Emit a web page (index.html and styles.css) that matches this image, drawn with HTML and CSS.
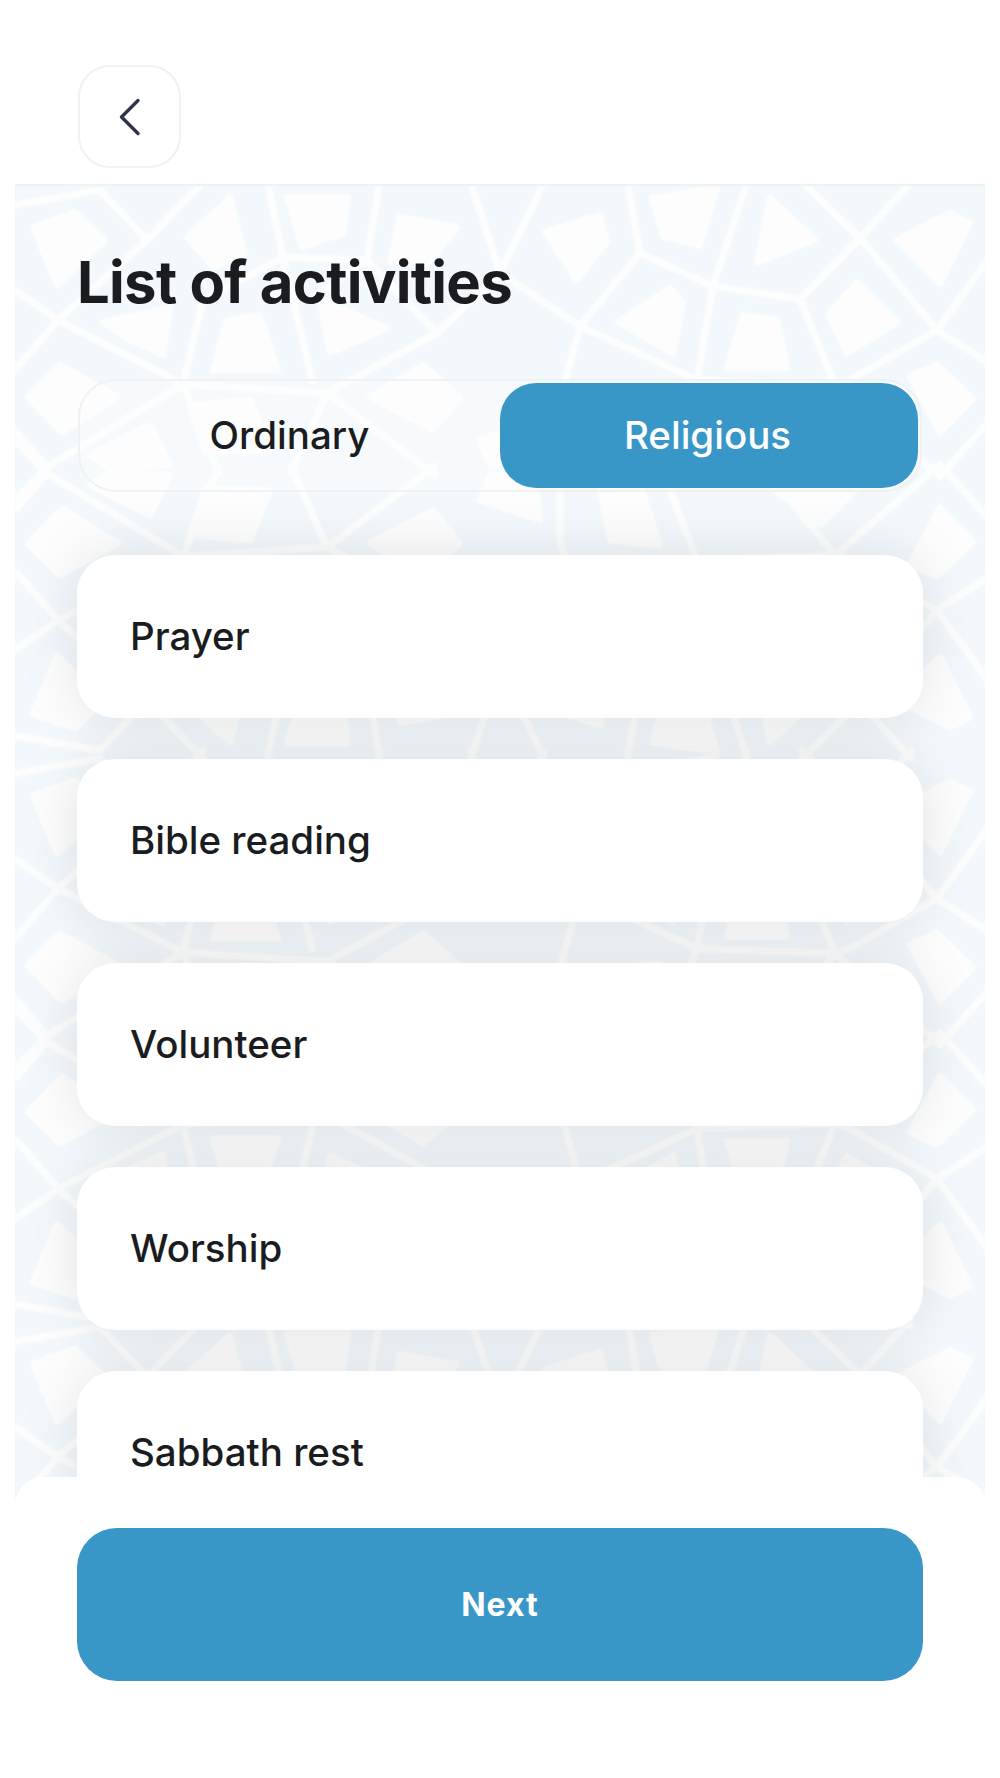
FILE: index.html
```html
<!DOCTYPE html>
<html lang="en">
<head>
  <meta charset="UTF-8">
  <meta name="viewport" content="width=device-width, initial-scale=1.0">
  <title>List of activities</title>
  <link rel="stylesheet" href="styles.css">
</head>
<body>
  <div class="screen">
    <header class="top-bar">
      <a class="back-btn" aria-label="Back">
        <svg width="24" height="40" viewBox="0 0 24 40" fill="none">
          <path d="M20 3.5 3.5 20 20 36.5" stroke="#2f3548" stroke-width="3.4" stroke-linecap="round" stroke-linejoin="round"/>
        </svg>
      </a>
    </header>

    <main class="content">
      <!-- background ornament, drawn in page coordinates -->
      <svg class="ornament" viewBox="15 186 970 1330" preserveAspectRatio="none" aria-hidden="true">
        <defs>
          <g id="tile">
            <g class="orn-lines">
              <path d="M15 205 100 190 147 240 205 180M147 240 58 320 15 290M58 320 183 384 327 393M58 320 15 370"/>
              <path d="M267 180 283 257 367 260 380 180M367 260 437 333 500 273 470 180M283 257 203 300 183 384M283 257 313 384M367 260 310 300M437 333 327 393"/>
              <path d="M327 393 437 476M327 393 290 476M183 384 47 467 15 430M47 467 15 500M183 384 220 476"/>
              <path d="M627 180 640 253 713 286 748 180M640 253 580 326 500 273M500 273 545 180M580 326 560 400 560 476M580 326 697 380"/>
              <path d="M713 286 697 380 835 385M713 286 800 299 860 238 800 180M860 238 913 180M860 238 937 330 850 380 835 385M800 299 835 385"/>
              <path d="M937 330 990 364M937 330 990 257M835 385 760 476M835 385 940 476 990 420M697 380 660 476"/>
            </g>
            <g class="orn-cells">
              <polygon points="33,227 75,212 105,240 57,285"/>
              <polygon points="187,237 230,198 245,257 213,267"/>
              <polygon points="287,197 348,197 343,233 302,247"/>
              <polygon points="400,217 457,227 427,265 390,262"/>
              <polygon points="103,322 170,307 163,355 130,340"/>
              <polygon points="213,370 227,320 260,315 278,370"/>
              <polygon points="320,300 387,328 330,353"/>
              <polygon points="28,397 60,365 118,397 62,432"/>
              <polygon points="370,397 423,365 460,397 433,430"/>
              <polygon points="190,405 250,400 270,450 205,452"/>
              <polygon points="545,232 600,215 607,242 577,280"/>
              <polygon points="652,198 717,188 700,246 663,236"/>
              <polygon points="770,198 815,240 757,263"/>
              <polygon points="897,240 950,213 970,223 940,284"/>
              <polygon points="618,322 670,288 683,303 673,353"/>
              <polygon points="727,368 743,315 777,320 787,368"/>
              <polygon points="828,315 857,282 898,322 847,353"/>
              <polygon points="910,376 937,364 973,399 940,433"/>
              <polygon points="480,440 540,420 535,465 490,465"/>
              <polygon points="610,400 660,395 640,455 600,450"/>
              <polygon points="775,450 820,415 870,465 790,468"/>
              <polygon points="90,455 150,425 170,465 110,468"/>
            </g>
          </g>
          <g id="tile-pair">
            <use href="#tile"/>
            <use href="#tile" transform="translate(0 940) scale(1 -1)"/>
          </g>
        </defs>
        <use href="#tile-pair"/>
        <use href="#tile-pair" transform="translate(0 568)"/>
        <use href="#tile-pair" transform="translate(0 1136)"/>
      </svg>

      <h1 class="page-title">List of activities</h1>

      <div class="segment">
        <div class="segment-item">Ordinary</div>
        <div class="segment-item active">Religious</div>
      </div>

      <div class="activity-list">
        <div class="activity-card">Prayer</div>
        <div class="activity-card">Bible reading</div>
        <div class="activity-card">Volunteer</div>
        <div class="activity-card">Worship</div>
        <div class="activity-card">Sabbath rest</div>
      </div>
    </main>

    <footer class="bottom-bar">
      <button class="next-btn">Next</button>
    </footer>
  </div>
</body>
</html>
```

FILE: styles.css
```css
* {
  box-sizing: border-box;
}

body {
  margin: 0;
  background-color: white;
  font-family: Inter, "Liberation Sans", sans-serif;
  color: #1a1c20;
}

.screen {
  width: 970px;
  height: 1778px;
  margin: 0 auto;
  display: flex;
  flex-direction: column;
  overflow: hidden;
}

.top-bar {
  height: 186px;
  flex-shrink: 0;
  padding: 65px 63px 0;
  border-bottom: 2px solid #f0f1f3;
}

.back-btn {
  width: 103px;
  height: 103px;
  display: flex;
  align-items: center;
  justify-content: center;
  border: 2px solid #f0f1f4;
  border-radius: 32px;
}

.content {
  position: relative;
  height: 1331px;
  flex-shrink: 0;
  padding: 0 62px;
  overflow: hidden;
  background-color: #f2f8fb;
}

.ornament {
  position: absolute;
  top: 0;
  left: 0;
  width: 100%;
  height: 100%;
  opacity: 0.85;
  filter: blur(1px);
}

.orn-lines {
  fill: none;
  stroke: white;
  stroke-width: 7;
}

.orn-cells {
  fill: white;
  stroke: white;
  stroke-width: 6;
  stroke-linejoin: round;
}

.page-title {
  position: relative;
  margin: 62px 0 0;
  font-size: 58px;
  line-height: 68px;
  font-weight: 700;
  letter-spacing: -0.7px;
}

.segment {
  position: relative;
  height: 113px;
  margin: 63px 1px 0;
  padding: 2px;
  display: grid;
  grid-template-columns: 1fr 1fr;
  border: 2px solid #eff1f3;
  border-radius: 38px;
  background-color: rgba(255, 255, 255, 0.3);
}

.segment-item {
  display: flex;
  align-items: center;
  justify-content: center;
  padding: 0 3px 2px 0;
  border-radius: 36px;
  font-size: 38.5px;
  font-weight: 550;
}

.segment-item.active {
  background-color: #3997c8;
  color: white;
}

.activity-list {
  position: relative;
  margin-top: 63px;
  display: flex;
  flex-direction: column;
  gap: 41px;
}

.activity-card {
  height: 163px;
  flex-shrink: 0;
  padding: 0 53px 1px;
  display: flex;
  align-items: center;
  background-color: white;
  border-radius: 38px;
  box-shadow: 0 0 60px rgba(0, 0, 0, 0.1);
  font-size: 38.5px;
  font-weight: 550;
}

.bottom-bar {
  position: relative;
  flex: 1;
  margin-top: -40px;
  padding: 51px 62px 0;
  background-color: white;
  border-radius: 28px 28px 0 0;
}

.next-btn {
  width: 100%;
  height: 153px;
  border: none;
  border-radius: 40px;
  background-color: #3997c8;
  color: white;
  font-family: inherit;
  font-size: 32px;
  font-weight: 700;
  letter-spacing: 1px;
}
```
